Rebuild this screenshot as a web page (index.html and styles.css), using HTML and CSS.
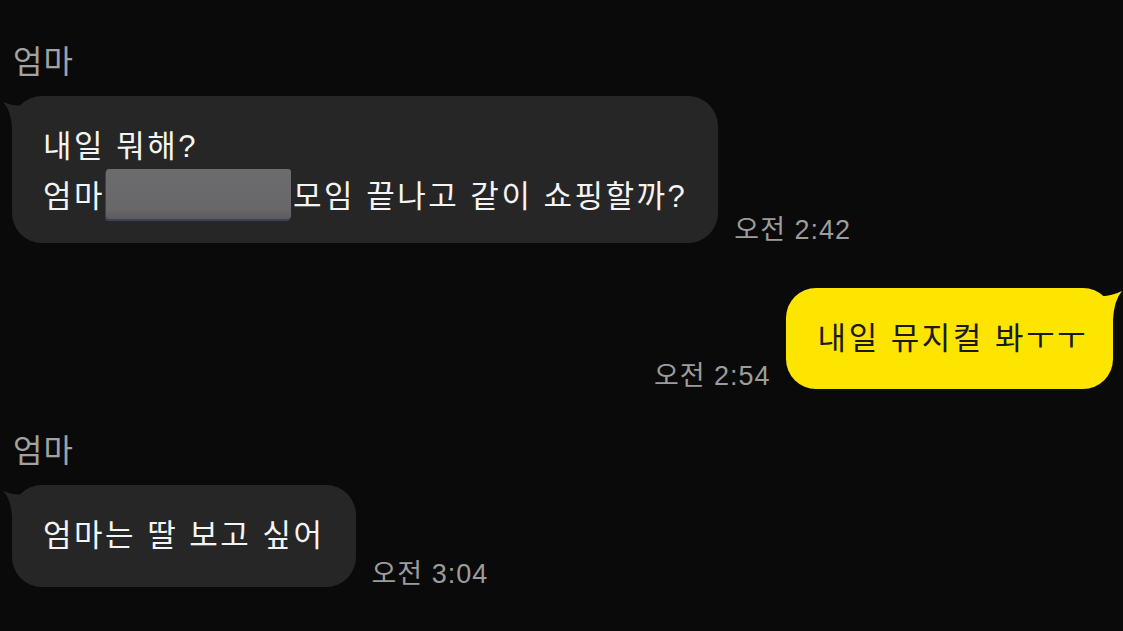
FILE: index.html
```html
<!DOCTYPE html>
<html lang="ko">
<head>
<meta charset="utf-8">
<title>채팅</title>
<link rel="stylesheet" href="styles.css">
</head>
<body>
<div class="chat">
  <div class="group first">
    <div class="name">엄마</div>
    <div class="row">
      <div class="bubble gray">
        <svg class="tail tail-left" viewBox="0 0 30 40" width="30" height="40"><path d="M1 6 Q 13 11 24 9 L 24 40 L 10 40 L 10 32 Q 9 14 1 6 Z"/></svg>
        <p><span class="line">내일 뭐해?</span><span class="line">엄마<span class="redact"></span>모임 끝나고 같이 쇼핑할까?</span></p>
      </div>
      <div class="time">오전 2:42</div>
    </div>
  </div>
  <div class="row mine">
    <div class="time">오전 2:54</div>
    <div class="bubble yellow">
      <svg class="tail tail-right" viewBox="0 0 30 40" width="30" height="40"><path d="M29 3 Q 17 9 6 8 L 6 40 L 20 40 L 20 32 Q 21 12 29 3 Z"/></svg>
      <p><span class="line">내일 뮤지컬 봐ㅜㅜ</span></p>
    </div>
  </div>
  <div class="group second">
    <div class="name">엄마</div>
    <div class="row">
      <div class="bubble gray">
        <svg class="tail tail-left" viewBox="0 0 30 40" width="30" height="40"><path d="M1 6 Q 13 11 24 9 L 24 40 L 10 40 L 10 32 Q 9 14 1 6 Z"/></svg>
        <p><span class="line">엄마는 딸 보고 싶어</span></p>
      </div>
      <div class="time">오전 3:04</div>
    </div>
  </div>
</div>
</body>
</html>
```
FILE: styles.css
```css
html, body {
  margin: 0;
  padding: 0;
  background: #0a0a0a;
}
body {
  font-family: "Liberation Sans", "Noto Sans CJK KR", sans-serif;
  color: #f2f2f2;
  width: 1123px;
  height: 631px;
  overflow: hidden;
}
.chat {
  padding-top: 44px;
  display: flex;
  flex-direction: column;
}
.name {
  font-size: 32px;
  line-height: 36px;
  letter-spacing: 1px;
  color: #a2a2a2;
  padding-left: 13px;
}
.group.first .name {
  margin-bottom: 16px;
}
.group.second {
  margin-top: 44px;
}
.group.second .name {
  margin-bottom: 16px;
}
.row {
  display: flex;
  align-items: flex-end;
  gap: 16px;
  padding-left: 12px;
}
.row.mine {
  justify-content: flex-end;
  padding-left: 0;
  padding-right: 10px;
  margin-top: 45px;
  gap: 15px;
}
.bubble {
  position: relative;
  border-radius: 30px;
  padding: 28px 31px 29px;
}
.bubble p {
  margin: 0;
  font-size: 31px;
  line-height: 45px;
  letter-spacing: 2.5px;
  white-space: nowrap;
}
.line {
  display: block;
  height: 45px;
}
.bubble.gray {
  background: #262626;
}
.bubble.gray p {
  color: #f4f4f4;
}
.bubble.yellow {
  background: #fee500;
  padding: 28px 25px 28px 32px;
}
.bubble.yellow p {
  color: #1a1a1a;
}
.tail {
  position: absolute;
  top: 0;
}
.tail-left {
  left: -10px;
  fill: #262626;
}
.tail-right {
  right: -10px;
  fill: #fee500;
}
.redact {
  display: inline-block;
  width: 185px;
  height: 50px;
  vertical-align: -12px;
  margin: 0 2px 0 1px;
  background: linear-gradient(180deg, #6c6c6f 0%, #68686b 80%, #5c5c60 100%);
  border-radius: 3px;
  box-shadow: -1px 2px 0 #3e4058;
}
.time {
  font-size: 27px;
  line-height: 30px;
  letter-spacing: 1px;
  color: #9c9c9c;
  margin-bottom: -2px;
  white-space: nowrap;
}
```
